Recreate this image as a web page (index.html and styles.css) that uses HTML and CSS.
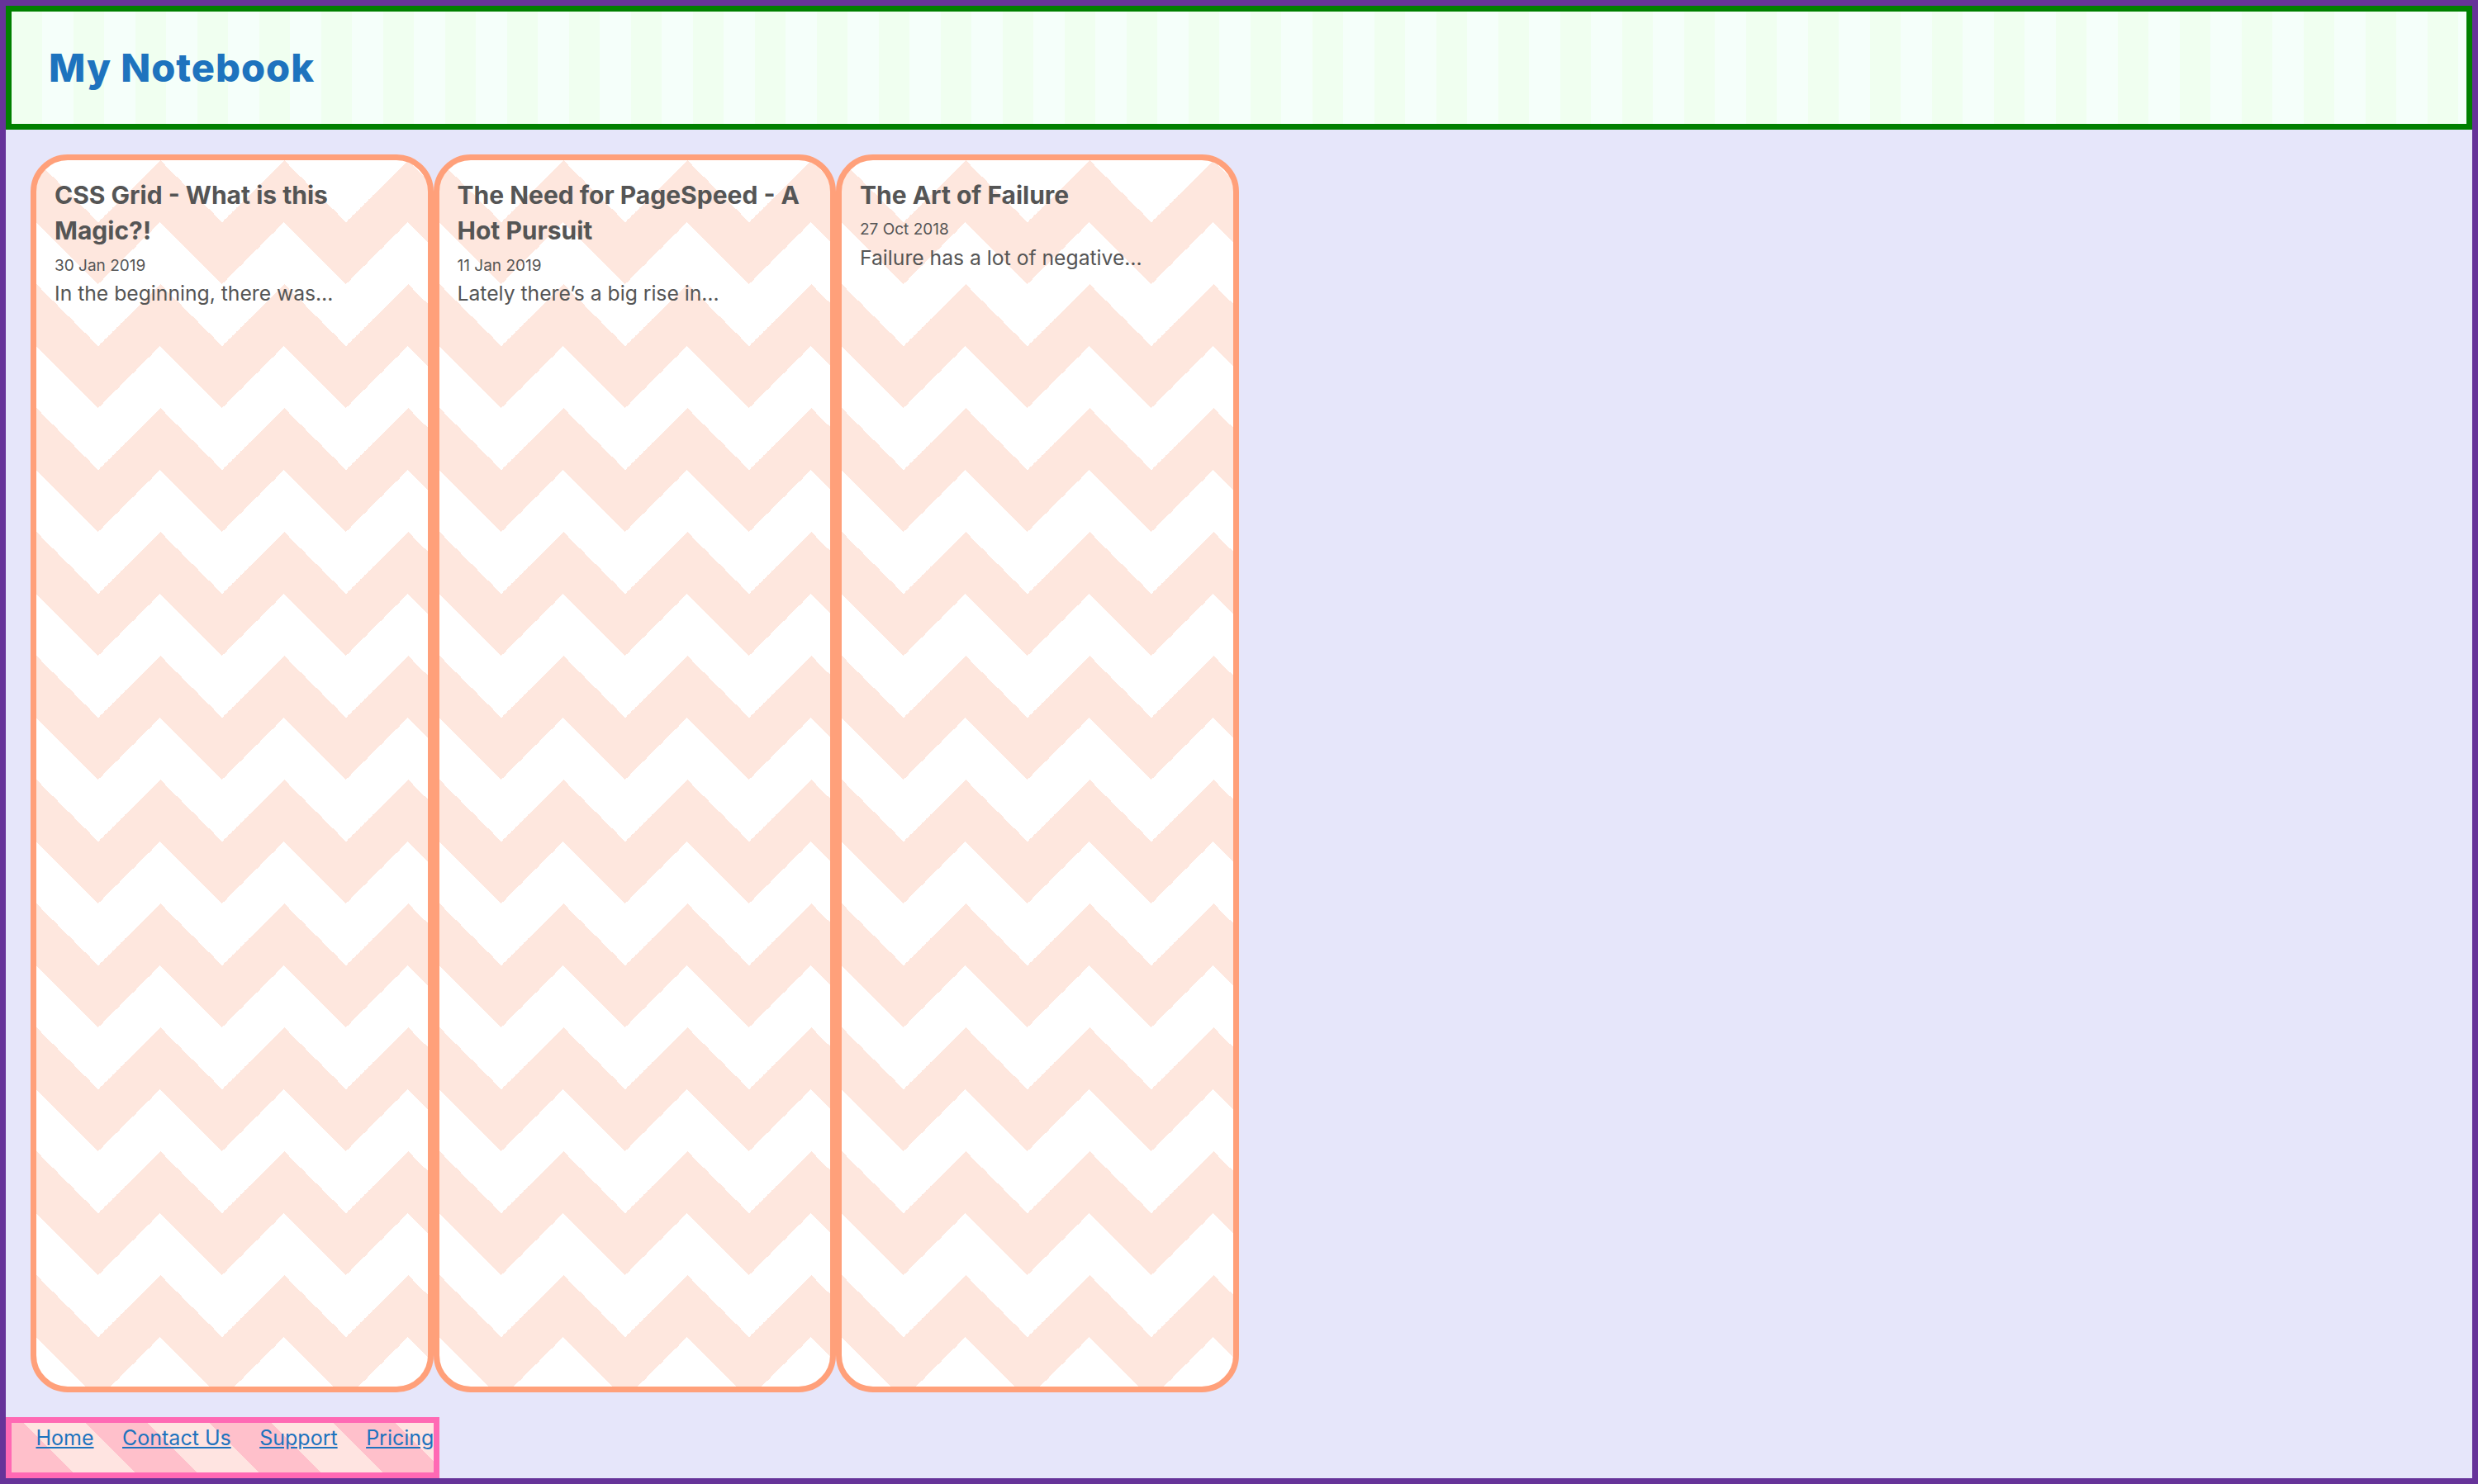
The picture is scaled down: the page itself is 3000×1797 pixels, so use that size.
FILE: index.html
```html
<!DOCTYPE html>
<html lang="en">
<head>
<meta charset="utf-8">
<title>My Notebook</title>
<link rel="stylesheet" href="styles.css">
</head>
<body>
  <header class="site-header">
    <h1 class="site-title">My Notebook</h1>
  </header>
  <main class="notes">
    <article class="note">
      <h2 class="note-title">CSS Grid - What is this Magic?!</h2>
      <time class="note-date">30 Jan 2019</time>
      <p class="note-excerpt">In the beginning, there was…</p>
    </article>
    <article class="note">
      <h2 class="note-title">The Need for PageSpeed - A Hot Pursuit</h2>
      <time class="note-date">11 Jan 2019</time>
      <p class="note-excerpt">Lately there’s a big rise in…</p>
    </article>
    <article class="note">
      <h2 class="note-title">The Art of Failure</h2>
      <time class="note-date">27 Oct 2018</time>
      <p class="note-excerpt">Failure has a lot of negative…</p>
    </article>
  </main>
  <footer class="site-footer">
    <a class="footer-link" href="#">Home</a>
    <a class="footer-link" href="#">Contact Us</a>
    <a class="footer-link" href="#">Support</a>
    <a class="footer-link" href="#">Pricing</a>
  </footer>
</body>
</html>
```

FILE: styles.css
```css
html {
  height: 100%;
}

body {
  margin: 0;
  min-height: 100%;
  box-sizing: border-box;
  border: 7.5px solid #663399;
  background: #e6e6fa;
  display: grid;
  grid-template-rows: auto 1fr auto;
  font-family: Inter, "Noto Sans", sans-serif;
  color: #555555;
}

.site-header {
  height: 149.5px;
  box-sizing: border-box;
  border: 7.5px solid #008000;
  padding: 44.4px 0 0 45px;
  background: repeating-linear-gradient(90deg, #f0fff0 0 37.5px, #f5fffa 37.5px 75px);
}

.site-title {
  margin: 0;
  font-weight: 800;
  font-size: 47px;
  line-height: 47px;
  letter-spacing: 1px;
  color: #1e73be;
}

.notes {
  display: grid;
  grid-template-columns: repeat(3, 487.5px);
  padding: 30px;
}

.note {
  border: 7.5px solid #ffa07a;
  border-radius: 45px;
  padding: 21.2px 22px;
  background:
    linear-gradient(135deg, #ffffff 25%, transparent 25%) -75px 0 / 150px 150px,
    linear-gradient(225deg, #ffffff 25%, transparent 25%) -75px 0 / 150px 150px,
    linear-gradient(315deg, #ffffff 25%, transparent 25%) 0 0 / 150px 150px,
    linear-gradient(45deg, #ffffff 25%, transparent 25%) 0 0 / 150px 150px,
    #fee7de;
}

.note-title {
  margin: 0 0 6.4px;
  font-weight: 700;
  font-size: 30px;
  line-height: 43.3px;
}

.note-date {
  display: block;
  margin-bottom: 1px;
  font-size: 19px;
  line-height: 28.5px;
}

.note-excerpt {
  margin: 0;
  font-size: 24.7px;
  line-height: 36px;
}

.site-footer {
  justify-self: start;
  display: flex;
  align-items: flex-start;
  gap: 34.5px;
  height: 74.5px;
  box-sizing: border-box;
  border: 7.5px solid #ff69b4;
  padding-left: 29.5px;
  background: repeating-linear-gradient(45deg, #ffc0cb 0 53px, #ffe4e1 53px 106px);
}

.footer-link {
  font-size: 25px;
  line-height: 36px;
  color: #1e73be;
}
```
